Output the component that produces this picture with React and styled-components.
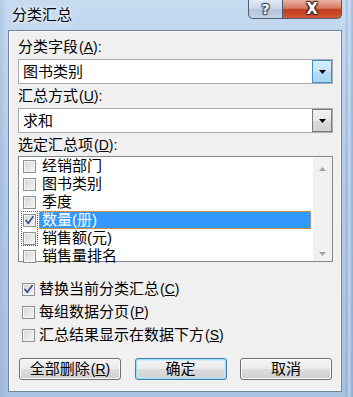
import React from 'react';
import styled, { createGlobalStyle, css } from 'styled-components';

const FONT = `"Liberation Sans", "Noto Sans CJK SC", sans-serif`;

const Global = createGlobalStyle`
  html, body { margin: 0; padding: 0; }
  body {
    width: 353px; height: 397px; overflow: hidden;
    font-family: ${FONT};
    background: #ffffff;
  }
`;

const Window = styled.div`
  width: 353px;
  height: 397px;
  box-sizing: border-box;
  display: flex;
  flex-direction: column;
  padding: 0 11px 5px 8px;
  background:
    linear-gradient(90deg, rgba(120,150,190,0.25) 0px, rgba(255,255,255,0) 6px, rgba(255,255,255,0) 345px, rgba(110,140,185,0.35) 347px, rgba(220,235,250,0.5) 349px, rgba(110,140,185,0.35) 352px),
    linear-gradient(180deg, #c6daf0 0%, #b5cce8 40%, #a8c2e2 100%);
`;

const TitleBar = styled.div`
  height: 30px;
  flex: none;
  display: flex;
  align-items: flex-start;
`;

const Title = styled.div`
  padding: 6px 0 0 4px;
  font-size: 15px;
  line-height: 17px;
  color: #000;
  text-shadow: 0 0 6px rgba(255,255,255,0.95), 0 0 3px rgba(255,255,255,0.9);
`;

const CaptionButtons = styled.div`
  margin-left: auto;
  display: flex;
`;

const CaptionButton = styled.div`
  height: 19px;
  box-sizing: border-box;
  border: 1px solid #4c5d74;
  border-top: none;
  display: flex;
  align-items: center;
  justify-content: center;
  font-family: "DejaVu Sans", sans-serif;
  font-weight: bold;
  color: #fff;
  ${p => p.$close ? css`
    width: 59px;
    border-left: none;
    border-radius: 0 0 5px 0;
    background: linear-gradient(180deg, #eab4a6 0%, #d77a62 45%, #c2391c 55%, #d45a3a 100%);
    font-size: 15px;
    text-shadow: 1px 1px 1px #40201a, -1px -1px 1px #40201a, 1px -1px 1px #40201a, -1px 1px 1px #40201a;
  ` : css`
    width: 35px;
    border-radius: 0 0 0 5px;
    background: linear-gradient(180deg, #e2eaf3 0%, #cdd9e7 45%, #b4c5da 55%, #c4d3e4 100%);
    font-size: 14px;
    color: #f4f4f4;
    text-shadow: 1px 1px 1px #3a4a60, -1px -1px 1px #3a4a60, 1px -1px 1px #3a4a60, -1px 1px 1px #3a4a60;
  `}
`;

const Client = styled.div`
  flex: 1;
  background: #f0f0f0;
  border: 1px solid #72849b;
  box-shadow: inset 0 0 0 1px #f8f8f8;
  padding: 7px 8px 0 9px;
  display: flex;
  flex-direction: column;
  font-size: 15px;
  color: #000;
`;

const Label = styled.div`
  height: 17px;
  line-height: 17px;
  margin-top: ${p => p.$mt || 0}px;
  margin-bottom: ${p => p.$mb || 0}px;
  white-space: nowrap;
`;

const Mnemonic = styled.span`
  font-family: "Liberation Sans", sans-serif;
  font-size: 14px;
  margin-left: 1px;
  u { text-underline-offset: 1px; }
`;

const Combo = styled.div`
  height: 25px;
  box-sizing: border-box;
  border: 1px solid #abadb3;
  background: #fff;
  display: flex;
  align-items: stretch;
`;

const ComboText = styled.div`
  flex: 1;
  padding-left: 4px;
  line-height: 23px;
`;

const DropButton = styled.div`
  width: 20px;
  box-sizing: border-box;
  display: flex;
  align-items: center;
  justify-content: center;
  ${p => p.$hot ? css`
    border: 1px solid #3c8fc8;
    background: linear-gradient(180deg, #d6eefb 0%, #c4e5f7 50%, #b3dcf3 51%, #a9d6f0 100%);
  ` : css`
    border: 1px solid #7a7a7a;
    background: linear-gradient(180deg, #f2f2f2 0%, #e8e8e8 50%, #dcdcdc 51%, #d2d2d2 100%);
  `}
`;

const ListBox = styled.div`
  height: 106px;
  box-sizing: border-box;
  border: 1px solid #828790;
  background: #fff;
  display: flex;
`;

const Items = styled.div`
  flex: 1;
  display: flex;
  flex-direction: column;
`;

const ItemRow = styled.div`
  position: relative;
  height: 18px;
  flex: none;
  display: flex;
  align-items: center;
  padding-left: 4px;
  ${p => p.$focus && css`
    &::before {
      content: '';
      position: absolute;
      left: 2px;
      top: 0;
      width: 17px;
      height: 35px;
      box-sizing: border-box;
      border: 1px dotted #5a5a5a;
      pointer-events: none;
    }
  `}
`;

const ItemText = styled.div`
  margin-left: 3px;
  padding-left: 3px;
  height: 18px;
  line-height: 18px;
  box-sizing: border-box;
  white-space: nowrap;
  ${p => p.$selected && css`
    flex: 1;
    margin-right: 2px;
    background: #3399ff;
    color: #fff;
    outline: 1px dotted #e0a050;
    outline-offset: -1px;
  `}
`;

const ScrollBar = styled.div`
  width: 19px;
  background: #f1f1f1;
  display: flex;
  flex-direction: column;
  justify-content: space-between;
  align-items: center;
  padding: 10px 0 5px;
`;

const Box = styled.div`
  width: 13px;
  height: 13px;
  flex: none;
  box-sizing: border-box;
  border: 1px solid #8f8f8f;
  background: linear-gradient(135deg, #d2d2d2 0%, #e6e6e6 50%, #f8f8f8 100%);
  box-shadow: inset 0 0 0 1px #f4f4f4;
  display: flex;
  align-items: center;
  justify-content: center;
`;

const Options = styled.div`
  margin-top: 18px;
  display: flex;
  flex-direction: column;
  gap: 5px;
`;

const OptionRow = styled.div`
  height: 18px;
  display: flex;
  align-items: center;
  padding-left: 4px;
  gap: 4px;
  line-height: 18px;
  white-space: nowrap;
`;

const ButtonRow = styled.div`
  margin-top: 14px;
  padding: 0 1px;
  display: flex;
  justify-content: space-between;
`;

const Button = styled.div`
  width: ${p => p.$w}px;
  height: 22px;
  box-sizing: border-box;
  border-radius: 3px;
  display: flex;
  align-items: center;
  justify-content: center;
  line-height: 20px;
  white-space: nowrap;
  background: linear-gradient(180deg, #f4f4f4 0%, #ebebeb 50%, #dddddd 51%, #cfcfcf 100%);
  ${p => p.$default ? css`
    border: 1px solid #3c7fb1;
    box-shadow: inset 0 0 0 1px #9edcf8, inset 0 0 0 2px rgba(200,235,252,0.7);
  ` : css`
    border: 1px solid #707070;
    box-shadow: inset 0 0 0 1px #fbfbfb;
  `}
`;

const Arrow = ({ color = '#000', up = false }) => (
  <svg width="7" height="4" viewBox="0 0 7 4">
    <path d={up ? 'M0 4 L3.5 0 L7 4 Z' : 'M0 0 L7 0 L3.5 4 Z'} fill={color} />
  </svg>
);

const Check = () => (
  <svg width="11" height="11" viewBox="0 0 11 11">
    <path d="M2 5.5 L4.3 8.3 L9 1.8" fill="none" stroke="#3c5290" strokeWidth="1.8" strokeLinecap="round" strokeLinejoin="round" />
  </svg>
);

const CheckBox = ({ checked }) => <Box>{checked && <Check />}</Box>;

const M = ({ k, colon }) => <Mnemonic>(<u>{k}</u>){colon ? ':' : ''}</Mnemonic>;

const items = ['经销部门', '图书类别', '季度', '数量(册)', '销售额(元)', '销售量排名'];

export default function App() {
  return (
    <>
      <Global />
      <Window>
        <TitleBar>
          <Title>分类汇总</Title>
          <CaptionButtons>
            <CaptionButton>?</CaptionButton>
            <CaptionButton $close>X</CaptionButton>
          </CaptionButtons>
        </TitleBar>
        <Client>
          <Label $mb={4}>分类字段<M k="A" colon /></Label>
          <Combo>
            <ComboText>图书类别</ComboText>
            <DropButton $hot><Arrow /></DropButton>
          </Combo>
          <Label $mt={3} $mb={4}>汇总方式<M k="U" colon /></Label>
          <Combo>
            <ComboText>求和</ComboText>
            <DropButton><Arrow /></DropButton>
          </Combo>
          <Label $mt={3} $mb={3}>选定汇总项<M k="D" colon /></Label>
          <ListBox>
            <Items>
              {items.map((t, i) => (
                <ItemRow key={t} $focus={i === 3}>
                  <CheckBox checked={i === 3} />
                  <ItemText $selected={i === 3}>{t}</ItemText>
                </ItemRow>
              ))}
            </Items>
            <ScrollBar>
              <Arrow up color="#a3a3a3" />
              <Arrow color="#a3a3a3" />
            </ScrollBar>
          </ListBox>
          <Options>
            <OptionRow><CheckBox checked /><span>替换当前分类汇总<M k="C" /></span></OptionRow>
            <OptionRow><CheckBox /><span>每组数据分页<M k="P" /></span></OptionRow>
            <OptionRow><CheckBox /><span>汇总结果显示在数据下方<M k="S" /></span></OptionRow>
          </Options>
          <ButtonRow>
            <Button $w={102}>全部删除<M k="R" /></Button>
            <Button $w={92} $default>确定</Button>
            <Button $w={92}>取消</Button>
          </ButtonRow>
        </Client>
      </Window>
    </>
  );
}
